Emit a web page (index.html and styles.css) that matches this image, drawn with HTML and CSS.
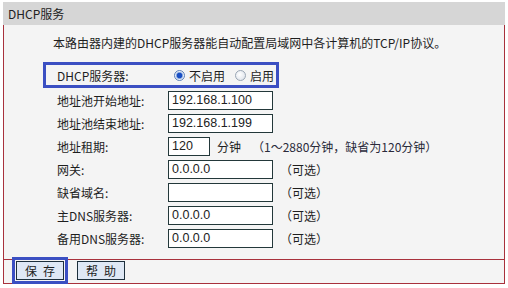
FILE: index.html
```html
<!DOCTYPE html>
<html>
<head>
    <meta charset="utf-8">
    <title>DHCP服务</title>
    <link rel="stylesheet" href="styles.css">
</head>
<body>
    <div class="wrap">
        <div class="title">DHCP服务</div>
        <div class="panel">
            <p class="intro">本路由器内建的DHCP服务器能自动配置局域网中各计算机的TCP/IP协议。</p>

            <div class="dhcp-row">
                <span class="label">DHCP服务器:</span>
                <span class="radio checked"></span><span class="opt">不启用</span>
                <span class="radio"></span><span class="opt">启用</span>
            </div>

            <div class="form">
                <div class="label">地址池开始地址:</div>
                <div class="field"><span class="input">192.168.1.100</span></div>

                <div class="label">地址池结束地址:</div>
                <div class="field"><span class="input">192.168.1.199</span></div>

                <div class="label">地址租期:</div>
                <div class="field"><span class="input short">120</span><span class="unit">分钟</span><span class="note">（1～2880分钟，缺省为120分钟）</span></div>

                <div class="label">网关:</div>
                <div class="field"><span class="input">0.0.0.0</span><span class="opt-note">（可选）</span></div>

                <div class="label">缺省域名:</div>
                <div class="field"><span class="input"></span><span class="opt-note">（可选）</span></div>

                <div class="label">主DNS服务器:</div>
                <div class="field"><span class="input">0.0.0.0</span><span class="opt-note">（可选）</span></div>

                <div class="label">备用DNS服务器:</div>
                <div class="field"><span class="input">0.0.0.0</span><span class="opt-note">（可选）</span></div>
            </div>

            <div class="actions">
                <button class="btn focused">保存</button>
                <button class="btn">帮助</button>
            </div>
        </div>
    </div>
</body>
</html>
```

FILE: styles.css
```css
body {
    margin: 0;
    background: #fff;
    font-family: "Noto Sans CJK SC", "Liberation Sans", sans-serif;
    font-size: 12px;
    color: #1e1e1e;
}
.wrap {
    width: 502px;
    margin: 2px 0 0 3px;
}
.title {
    height: 23px;
    line-height: 23px;
    padding-left: 5px;
    background: #d6d6d6;
    color: #222;
}
.panel {
    background: #f4f4f4;
    border: 1px solid #a8313c;
    border-top: none;
}
.intro {
    margin: 0;
    padding: 9px 0 0 49px;
    height: 18px;
    line-height: 18px;
}
.dhcp-row {
    display: flex;
    align-items: center;
    white-space: nowrap;
    width: 230px;
    height: 20px;
    margin: 10px 0 0 39px;
    border: 3px solid #3b4fc2;
}
.dhcp-row > span {
    flex-shrink: 0;
}
.dhcp-row .label {
    width: 117px;
    padding-left: 11px;
}
.radio {
    width: 11px;
    height: 11px;
    border-radius: 50%;
    border: 1px solid #9aa6b4;
    background: radial-gradient(circle at 40% 40%, #fff, #d8dde6);
    box-sizing: border-box;
    margin-right: 4px;
}
.radio.checked {
    border-color: #5b7fb8;
    background: radial-gradient(circle, #1a4fc4 0 2.5px, #7fa2dc 3px, #e8eef8 4px);
}
.opt {
    margin-right: 10px;
}
.form {
    display: grid;
    grid-template-columns: 111px auto;
    grid-auto-rows: 23px;
    padding-left: 53px;
    margin-top: 1px;
}
.form .label,
.field {
    display: flex;
    align-items: center;
    white-space: nowrap;
}
.input {
    width: 105px;
    height: 19px;
    line-height: 17px;
    box-sizing: border-box;
    border: 1px solid #23383a;
    background: #fff;
    padding-left: 3px;
    font-family: "Liberation Sans", sans-serif;
    font-size: 12.5px;
    color: #222;
}
.input.short {
    width: 42px;
}
.unit {
    margin-left: 7px;
}
.note {
    margin-left: 11px;
    color: #2a2a3a;
}
.opt-note {
    margin-left: 7px;
}
.actions {
    display: flex;
    gap: 13px;
    margin-top: 9px;
    padding: 1px 0 3px 12px;
    border-top: 1px solid #a8313c;
    height: 19px;
}
.btn {
    width: 48px;
    height: 19px;
    padding: 0 0 0 6px;
    border: 1px solid #1d2f3c;
    background: #dfe8f5;
    font-family: inherit;
    font-size: 12px;
    letter-spacing: 6px;
    color: #1e1e1e;
}
.btn.focused {
    outline: 3px solid #3b4fc2;
    outline-offset: 1px;
}
```
